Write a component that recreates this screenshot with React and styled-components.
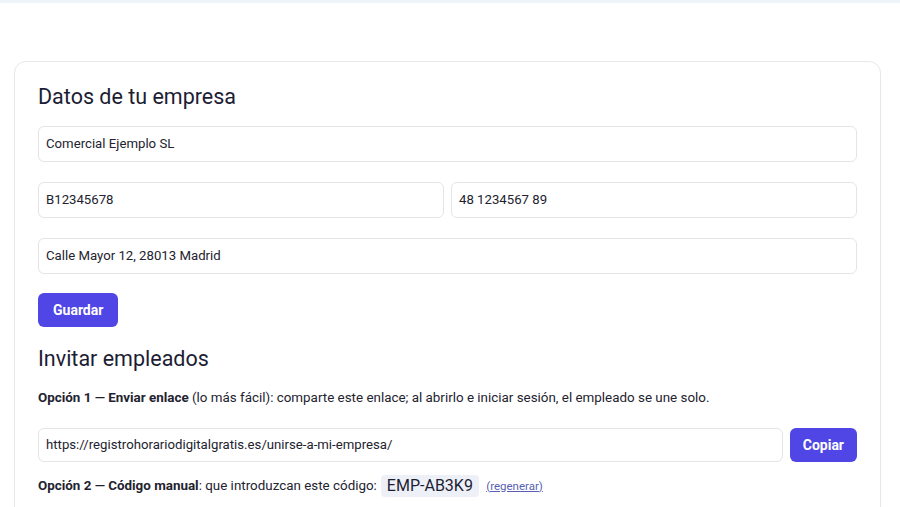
import React from 'react';
import styled, { createGlobalStyle } from 'styled-components';

const GlobalStyle = createGlobalStyle`
    body {
        margin: 0;
        background: #ffffff;
        font-family: Roboto, "Noto Sans", "Liberation Sans", sans-serif;
        color: #1f2233;
    }
`

const TopBar = styled.div`
    height: 3px;
    background: #eef4f8;
`

const Card = styled.section`
    margin: 58px 19px 0 14px;
    padding: 22px 23px 30px 23px;
    border: 1px solid #e7e8ec;
    border-radius: 12px;
    background: #fff;
    box-shadow: 0 1px 2px rgba(20, 20, 40, 0.03);
`

const Title = styled.h2`
    margin: 0 0 16px 0;
    font-size: 21.5px;
    font-weight: 400;
    line-height: 1.2;
    color: #1c1d33;
`

const Form = styled.div`
    display: flex;
    flex-direction: column;
    gap: 20px;
`

const Row = styled.div`
    display: flex;
    gap: 7px;
`

const Field = styled.input`
    display: block;
    width: 100%;
    flex: 1 1 auto;
    min-width: 0;
    box-sizing: border-box;
    height: ${(p) => p.$h || 36}px;
    padding: 0 7px;
    border: 1px solid #e4e5e9;
    border-radius: 6px;
    font-family: inherit;
    font-size: 13.2px;
    color: #23232f;
    background: #fff;
    outline: none;
`

const Button = styled.button`
    height: ${(p) => p.$h || 34}px;
    padding: 0 ${(p) => p.$px || 15}px;
    border: none;
    border-radius: 6px;
    background: #4f46e5;
    color: #fff;
    font-family: inherit;
    font-size: 14px;
    font-weight: 700;
    cursor: pointer;
    flex-shrink: 0;
`

const SaveRow = styled.div`
    margin-top: 19px;
    margin-bottom: 19px;
`

const Text = styled.p`
    margin: 0;
    font-size: 13.4px;
    line-height: 20px;
    color: #23232f;
    b {
        font-weight: 700;
    }
`

const LinkRow = styled(Row)`
    margin: 20px 0 13px 0;
`

const Code = styled.span`
    display: inline-block;
    margin: 0 4px 0 4px;
    padding: 0 6px;
    border-radius: 4px;
    background: #eef0f8;
    font-size: 16px;
    line-height: 22px;
    color: #1c1d33;
    vertical-align: middle;
`

const Regen = styled.a`
    font-size: 11.5px;
    color: #5a5fb3;
    text-decoration: underline;
    vertical-align: middle;
    cursor: pointer;
`

export default function App() {
    return (
        <>
            <GlobalStyle />
            <TopBar />
            <Card>
                <Title>Datos de tu empresa</Title>
                <Form>
                    <Field defaultValue="Comercial Ejemplo SL" />
                    <Row>
                        <Field defaultValue="B12345678" />
                        <Field defaultValue="48 1234567 89" />
                    </Row>
                    <Field defaultValue="Calle Mayor 12, 28013 Madrid" />
                </Form>
                <SaveRow>
                    <Button>Guardar</Button>
                </SaveRow>
                <Title>Invitar empleados</Title>
                <Text>
                    <b>Opción 1 — Enviar enlace</b> (lo más fácil): comparte este enlace; al abrirlo e iniciar sesión, el empleado se une solo.
                </Text>
                <LinkRow>
                    <Field $h={34} readOnly defaultValue="https://registrohorariodigitalgratis.es/unirse-a-mi-empresa/" />
                    <Button $px={13}>Copiar</Button>
                </LinkRow>
                <Text>
                    <b>Opción 2 — Código manual</b>: que introduzcan este código:<Code>EMP-AB3K9</Code> <Regen>(regenerar)</Regen>
                </Text>
            </Card>
        </>
    );
}
